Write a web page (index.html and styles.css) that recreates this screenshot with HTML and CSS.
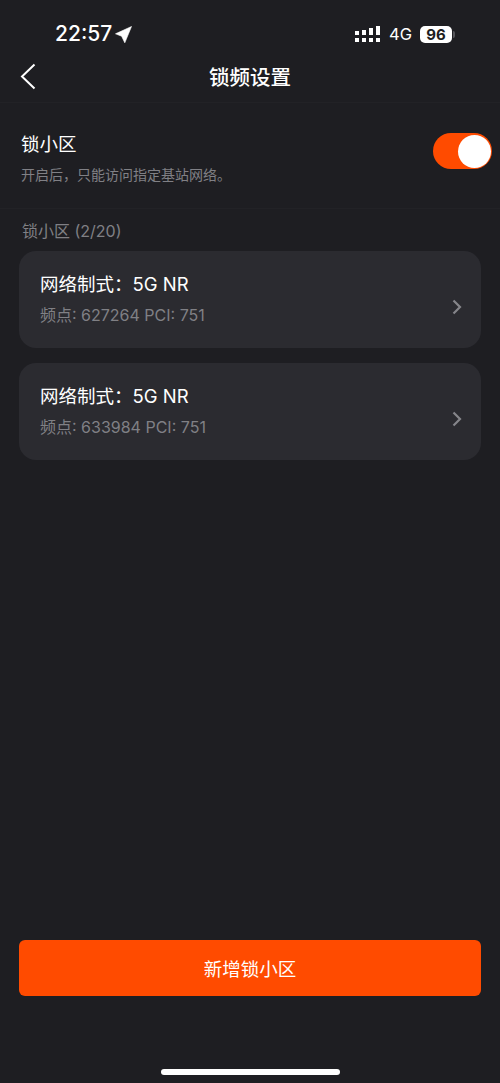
FILE: index.html
```html
<!DOCTYPE html>
<html lang="zh-CN">
<head>
    <meta charset="UTF-8">
    <meta name="viewport" content="width=device-width, initial-scale=1.0">
    <title>锁频设置</title>
    <link rel="stylesheet" href="styles.css">
</head>
<body>
    <div class="phone">
        <div class="status-bar">
            <div class="status-left">
                <span class="time">22:57</span>
                <svg class="location-icon" width="17" height="17" viewBox="0 0 17 17"><path d="M16.5 0.5 L0.5 7.8 L6.6 10.2 L9.8 16.8 Z" fill="#fff" stroke="#fff" stroke-width="0.6" stroke-linejoin="round"/></svg>
            </div>
            <div class="status-right">
                <svg class="signal-icon" width="25" height="17" viewBox="0 0 25 17">
                    <rect x="0" y="5" width="4" height="4" fill="#fff"/>
                    <rect x="0" y="12" width="4" height="4" fill="#fff"/>
                    <rect x="7" y="4" width="4" height="5" fill="#fff"/>
                    <rect x="7" y="12" width="4" height="4" fill="#fff"/>
                    <rect x="14" y="2" width="4" height="7" fill="#fff"/>
                    <rect x="14" y="12" width="4" height="4" fill="#fff"/>
                    <rect x="21" y="0" width="4" height="9" fill="#fff"/>
                    <rect x="21" y="12" width="4" height="4" fill="#fff"/>
                </svg>
                <span class="network">4G</span>
                <span class="battery">96</span>
                <span class="battery-cap"></span>
            </div>
        </div>

        <div class="nav-bar">
            <svg class="back-icon" width="16" height="27" viewBox="0 0 16 27"><path d="M14.5 1.5 L2 13.5 L14.5 25.5" fill="none" stroke="#fff" stroke-width="2"/></svg>
            <h1>锁频设置</h1>
        </div>

        <div class="lock-section">
            <div>
                <div class="lock-title">锁小区</div>
                <div class="lock-desc">开启后，只能访问指定基站网络。</div>
            </div>
            <div class="switch"><span class="switch-knob"></span></div>
        </div>

        <div class="list-section">
            <div class="list-title">锁小区 (2/20)</div>
            <div class="cell-card">
                <div>
                    <div class="cell-type">网络制式：5G NR</div>
                    <div class="cell-info">频点: 627264 PCI: 751</div>
                </div>
                <svg class="chevron" width="10" height="16" viewBox="0 0 10 16"><path d="M1.5 1.5 L8 8 L1.5 14.5" fill="none" stroke="#85858a" stroke-width="2.2"/></svg>
            </div>
            <div class="cell-card">
                <div>
                    <div class="cell-type">网络制式：5G NR</div>
                    <div class="cell-info">频点: 633984 PCI: 751</div>
                </div>
                <svg class="chevron" width="10" height="16" viewBox="0 0 10 16"><path d="M1.5 1.5 L8 8 L1.5 14.5" fill="none" stroke="#85858a" stroke-width="2.2"/></svg>
            </div>
        </div>

        <div class="bottom-area">
            <button class="add-btn">新增锁小区</button>
            <div class="home-bar"></div>
        </div>
    </div>
</body>
</html>
```

FILE: styles.css
```css
html, body {
    margin: 0;
    padding: 0;
    background-color: #1e1e22;
}
body {
    font-family: Inter, "Noto Sans CJK SC", sans-serif;
    color: #fff;
}
.phone {
    display: flex;
    flex-direction: column;
    width: 500px;
    height: 1083px;
    overflow: hidden;
}
.status-bar {
    display: flex;
    justify-content: space-between;
    align-items: center;
    height: 50px;
    padding: 18px 45px 0 55px;
    box-sizing: border-box;
}
.status-left {
    display: flex;
    align-items: center;
    gap: 3px;
}
.time {
    font-size: 21px;
    font-weight: 500;
    line-height: 32px;
}
.status-right {
    display: flex;
    align-items: center;
}
.network {
    font-size: 16.5px;
    margin-left: 9px;
    line-height: 20px;
}
.battery {
    margin-left: 8px;
    width: 32px;
    height: 17px;
    background-color: #fff;
    color: #1e1e22;
    border-radius: 5px;
    font-size: 15px;
    font-weight: 700;
    line-height: 17px;
    text-align: center;
}
.battery-cap {
    width: 2px;
    height: 7px;
    margin-left: 1px;
    background-color: #55555a;
    border-radius: 0 2px 2px 0;
}
.nav-bar {
    display: flex;
    align-items: center;
    justify-content: center;
    position: relative;
    height: 52px;
    border-bottom: 1px solid #222226;
}
.nav-bar h1 {
    margin: 0;
    font-size: 20.5px;
    font-weight: 500;
}
.back-icon {
    position: absolute;
    left: 20px;
    top: 13px;
}
.lock-section {
    display: flex;
    justify-content: space-between;
    align-items: flex-start;
    height: 106px;
    padding: 27px 8px 0 21px;
    box-sizing: border-box;
    border-bottom: 1px solid #222226;
}
.lock-title {
    font-size: 18.5px;
    line-height: 28px;
}
.lock-desc {
    margin-top: 7px;
    font-size: 14px;
    line-height: 20px;
    color: #808085;
}
.switch {
    display: flex;
    justify-content: flex-end;
    align-items: center;
    width: 59px;
    height: 36px;
    margin-top: 3px;
    padding-right: 1px;
    box-sizing: border-box;
    background-color: #ff4b00;
    border-radius: 18px;
}
.switch-knob {
    width: 33px;
    height: 33px;
    background-color: #fff;
    border-radius: 50%;
}
.list-section {
    display: flex;
    flex-direction: column;
    gap: 15px;
    padding: 0 19px;
}
.list-title {
    margin: 12px 0 0 3px;
    height: 15px;
    font-size: 16px;
    line-height: 20px;
    color: #808085;
}
.cell-card {
    display: flex;
    justify-content: space-between;
    align-items: center;
    height: 97px;
    padding: 0 19px 0 21px;
    box-sizing: border-box;
    background-color: #2b2b30;
    border-radius: 17px;
}
.cell-type {
    margin-top: -3px;
    font-size: 18.5px;
    line-height: 24px;
}
.cell-info {
    margin-top: 9px;
    font-size: 16px;
    line-height: 20px;
    color: #808085;
}
.chevron {
    margin-top: 14px;
}
.bottom-area {
    display: flex;
    flex-direction: column;
    align-items: center;
    margin-top: auto;
}
.add-btn {
    width: 462px;
    height: 56px;
    border: none;
    border-radius: 6px;
    background-color: #ff4b00;
    color: #fff;
    font-family: inherit;
    font-size: 18.5px;
}
.home-bar {
    width: 179px;
    height: 6px;
    margin: 73px 0 8px;
    background-color: #fff;
    border-radius: 3px;
}
```
